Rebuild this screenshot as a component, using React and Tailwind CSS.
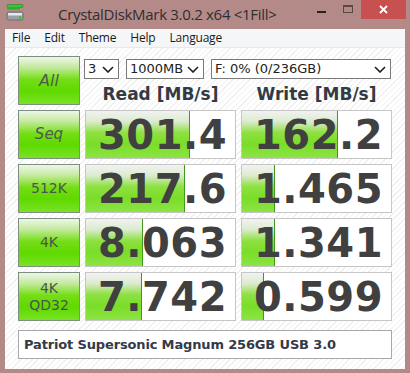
import React from "react";

const rows = [
  { label: ["Seq"], comic: true, read: "301.4", readFill: 104, write: "162.2", writeFill: 96 },
  { label: ["512K"], read: "217.6", readFill: 99, write: "1.465", writeFill: 33 },
  { label: ["4K"], read: "8.063", readFill: 57, write: "1.341", writeFill: 33 },
  { label: ["4K", "QD32"], read: "7.742", readFill: 56, write: "0.599", writeFill: 22 },
];

const btn =
  "w-[62px] h-[49px] shrink-0 border border-[#7f8f7f] flex flex-col items-center justify-center text-[#4a564a] bg-[linear-gradient(to_bottom,#eef6ea_0%,#c4ea9e_22%,#74de14_48%,#5fd900_72%,#78e324_100%)]";

function Chevron() {
  return (
    <svg width="12" height="7" viewBox="0 0 12 7" className="shrink-0">
      <polyline points="1,1 6,6 11,1" fill="none" stroke="#1e1e1e" strokeWidth="1.6" />
    </svg>
  );
}

function Select({ w, children }) {
  return (
    <div className={`${w} h-[20px] bg-white border border-[#7a7a7a] flex items-center justify-between pl-[3px] pr-[4px] text-[13px] text-[#222] font-['DejaVu_Sans',sans-serif]`}>
      <span>{children}</span>
      <Chevron />
    </div>
  );
}

function Cell({ value, fill }) {
  return (
    <div className="relative w-[151px] h-[49px] bg-white border border-[#c6c6c6] overflow-hidden">
      <div
        className="absolute left-0 top-0 bottom-0 border-r border-[#3f9a1c] bg-[linear-gradient(to_bottom,#f2f2f2_0%,#dcebd0_22%,#8fe042_46%,#7add28_70%,#8ce444_100%)]"
        style={{ width: fill }}
      />
      <div className="relative h-full flex items-center justify-end pr-[8px] text-[40px] font-bold leading-none text-[#404040] font-['DejaVu_Sans',sans-serif] tracking-[0.5px]">
        {value}
      </div>
    </div>
  );
}

export default function App() {
  return (
    <div className="w-[410px] h-[373px] bg-[#b48a88] flex flex-col overflow-hidden">
      {/* Title bar */}
      <div className="h-[29px] shrink-0 flex items-start relative">
        <svg width="18" height="17" viewBox="0 0 18 17" className="absolute left-[6px] top-[4px]">
          <rect x="1" y="0.5" width="16" height="3" rx="1" fill="#3cc43c" stroke="#1f8a2a" strokeWidth="0.6" />
          <rect x="1" y="3" width="13" height="2.5" rx="1" fill="#2fae2f" />
          <rect x="1" y="8" width="16" height="8" rx="1.5" fill="#9aa0a6" stroke="#5e656c" strokeWidth="0.8" />
          <rect x="2" y="9" width="14" height="2.5" fill="#e6e8ea" />
          <rect x="13" y="12" width="2" height="3" fill="#39c539" />
        </svg>
        <div className="pl-[58px] pt-[4px] text-[15px] leading-[20px] text-[#2e2e2e] font-['Open_Sans',sans-serif] tracking-[-0.3px]">
          CrystalDiskMark 3.0.2 x64 &lt;1Fill&gt;
        </div>
        <div className="absolute left-[317px] top-[11px] w-[9px] h-[2px] bg-[#222]" />
        <div className="absolute left-[343px] top-[5px] w-[10px] h-[8px] border border-[#5a4848] border-t-2" />
        <div className="absolute left-[361px] top-0 w-[45px] h-[19px] bg-[#c75050] flex items-center justify-center">
          <svg width="9" height="9" viewBox="0 0 9 9">
            <path d="M1 1 L8 8 M8 1 L1 8" stroke="#fff" strokeWidth="1.8" />
          </svg>
        </div>
      </div>

      {/* Client */}
      <div className="mx-[5px] mb-[4px] flex-1 flex flex-col bg-white">
        <div className="h-[19px] shrink-0 bg-[#f5f6f7] border-b border-[#e6e8ea] flex items-center text-[12px] text-[#1a1a1a] font-['Open_Sans',sans-serif] tracking-[-0.2px]">
          <span className="ml-[7px]">File</span>
          <span className="ml-[14px]">Edit</span>
          <span className="ml-[14px]">Theme</span>
          <span className="ml-[14px]">Help</span>
          <span className="ml-[14px]">Language</span>
        </div>

        <div className="flex-1 pl-[13px] pt-[8px] flex flex-col gap-[5px] bg-[repeating-linear-gradient(135deg,#ffffff_0px,#ffffff_3px,#efefef_3px,#efefef_4px)]">
          <div className="flex gap-[5px]">
            <div className={btn}>
              <span className="text-[16px] italic text-[#4e5c4e] font-['DejaVu_Sans',sans-serif]">All</span>
            </div>
            <div className="flex flex-col">
              <div className="flex gap-[7px] -ml-px mt-[3px]">
                <Select w="w-[35px]">3</Select>
                <Select w="w-[78px]">1000MB</Select>
                <Select w="w-[180px]">F: 0% (0/236GB)</Select>
              </div>
              <div className="flex gap-[5px] mt-[5px] text-[17px] font-bold text-[#333a44] font-['DejaVu_Sans',sans-serif] leading-[21px]">
                <div className="w-[151px] text-center">Read [MB/s]</div>
                <div className="w-[151px] text-center">Write [MB/s]</div>
              </div>
            </div>
          </div>

          {rows.map((r) => (
            <div key={r.read} className="flex gap-[5px]">
              <div className={btn}>
                {r.label.map((l) => (
                  <span
                    key={l}
                    className={
                      r.comic
                        ? "text-[15px] italic text-[#4e5c4e] font-['DejaVu_Sans',sans-serif]"
                        : "text-[14px] leading-[17px] font-['DejaVu_Sans',sans-serif]"
                    }
                  >
                    {l}
                  </span>
                ))}
              </div>
              <Cell value={r.read} fill={r.readFill} />
              <Cell value={r.write} fill={r.writeFill} />
            </div>
          ))}

          <div className="mt-[4px] w-[374px] h-[29px] bg-white border border-[#a8a8a8] flex items-center pl-[5px] text-[13px] font-bold text-[#333a48] font-['DejaVu_Sans',sans-serif] tracking-[-0.15px]">
            Patriot Supersonic Magnum 256GB USB 3.0
          </div>
        </div>
      </div>
    </div>
  );
}
